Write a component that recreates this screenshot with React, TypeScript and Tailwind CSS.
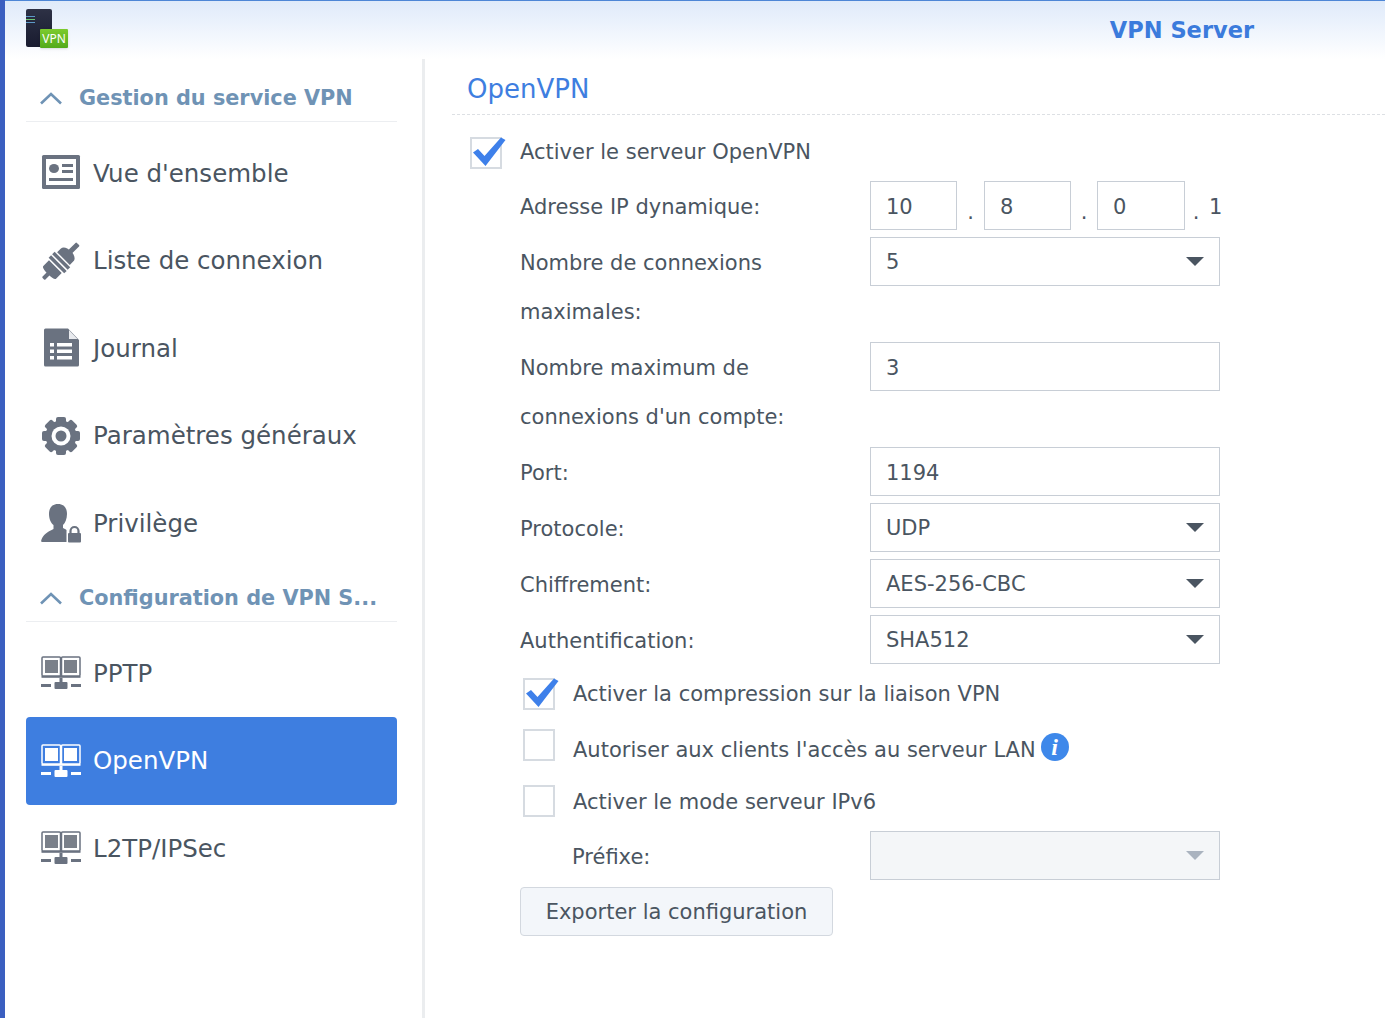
import React from "react";

const G = "#6a7280";

function IconCard() {
  return (
    <svg width="40" height="36" viewBox="0 0 40 36" className="-translate-y-[1px]">
      <rect x="1" y="1" width="38" height="34" rx="1.5" fill={G} />
      <rect x="5" y="5" width="30" height="26" fill="#fff" />
      <ellipse cx="13" cy="14.500" rx="5" ry="4.500" fill={G} />
      <rect x="21" y="10" width="11" height="3" fill={G} />
      <rect x="21" y="16" width="11" height="3" fill={G} />
      <rect x="8" y="24" width="24" height="3" fill={G} />
    </svg>
  );
}
function IconPlug() {
  return (
    <svg width="40" height="38" viewBox="0 0 40 38">
      <g transform="rotate(-45 20 19)" fill={G}>
        <rect x="-5" y="17" width="9" height="4" rx="1" />
        <path d="M4 10h8v18H4c-1.500 0-2.500-3-2.500-9S2.500 10 4 10z" />
        <rect x="13.500" y="8" width="3.500" height="22" />
        <rect x="18.500" y="8" width="3.500" height="22" />
        <path d="M23.500 10h5c3.500 0 5.500 4 5.500 9s-2 9-5.500 9h-5z" />
        <rect x="33" y="16.500" width="11" height="5" rx="1" />
      </g>
    </svg>
  );
}
function IconDoc() {
  return (
    <svg width="40" height="40" viewBox="0 0 40 40">
      <path d="M3 2a1.500 1.500 0 0 1 1.500-1.500H27L38 12v25a1.500 1.500 0 0 1-1.500 1.500h-32A1.500 1.500 0 0 1 3 37z" fill={G} />
      <path d="M28 2l8.500 9H28z" fill="#e8eaee" />
      <g fill="#fff">
        <rect x="9" y="15" width="4" height="3.500" />
        <rect x="16" y="15" width="15" height="3.500" />
        <rect x="9" y="21.500" width="4" height="3.500" />
        <rect x="16" y="21.500" width="15" height="3.500" />
        <rect x="9" y="28" width="4" height="3.500" />
        <rect x="16" y="28" width="15" height="3.500" />
      </g>
    </svg>
  );
}
function IconGear() {
  const teeth = [0, 45, 90, 135, 180, 225, 270, 315];
  return (
    <svg width="40" height="40" viewBox="0 0 40 40">
      <circle cx="20" cy="20" r="15.500" fill={G} />
      {teeth.map((a) => (
        <rect key={a} x="15" y="1" width="10" height="8" rx="2" fill={G} transform={`rotate(${a} 20 20)`} />
      ))}
      <circle cx="20" cy="20" r="9.500" fill="#fff" />
      <circle cx="20" cy="20" r="5.500" fill={G} />
    </svg>
  );
}
function IconUser() {
  return (
    <svg width="40" height="40" viewBox="0 0 40 40">
      <path d="M17 1c6 0 9 4 9 10 0 5-2 9-4 11v3c2 1 4 2 5.500 3V39H1c-1 0-1-1-.5-2.500C2 32 6 29 12.500 26v-4C10 20 8 16 8 11 8 5 11 1 17 1z" fill={G} />
      <rect x="25.500" y="22" width="15" height="18" fill="#fff" />
      <rect x="27" y="30" width="13" height="9.500" rx="1" fill={G} />
      <path d="M29.500 31v-3a4 4 0 0 1 8 0v3" fill="none" stroke={G} strokeWidth="2.200" />
    </svg>
  );
}
function IconNet({ c = G, fill = "#7a808a" }: { c?: string; fill?: string }) {
  return (
    <svg width="40" height="34" viewBox="0 0 40 34">
      <rect x="1" y="1" width="18.500" height="19" rx="1" fill="none" stroke={c} strokeWidth="1.500" />
      <rect x="20.500" y="1" width="18.500" height="19" rx="1" fill="none" stroke={c} strokeWidth="1.500" />
      <rect x="4" y="4" width="13" height="13" fill={fill} />
      <rect x="23" y="4" width="13" height="13" fill={fill} />
      <rect x="0.500" y="20" width="39" height="1.800" fill={c} />
      <rect x="18.500" y="22" width="3" height="5" fill={c} />
      <rect x="13.500" y="26" width="13" height="7" rx="1" fill={c} />
      <rect x="0" y="28" width="10" height="3" fill={c} />
      <rect x="30" y="28" width="10" height="3" fill={c} />
    </svg>
  );
}

function Logo() {
  return (
    <div className="relative w-[44px] h-[44px]">
      <div className="w-[26px] h-[38px] rounded-[2px] bg-gradient-to-b from-[#2d3145] to-[#191c30] flex flex-col gap-[2px] pt-[7px]">
        <div className="w-[9px] h-[1px] bg-[#5d9ac8]" />
        <div className="w-[9px] h-[1px] bg-[#6fc86f]" />
        <div className="w-[9px] h-[1px] bg-[#5d9ac8]" />
      </div>
      <div
        className="absolute left-[14px] top-[20px] w-[28px] h-[19px] rounded-[1px] bg-gradient-to-b from-[#7ccb2e] to-[#52aa1a] text-white text-[12px] leading-[19px] text-center shadow-sm"
        style={{ fontFamily: "'Noto Sans', sans-serif" }}
      >
        VPN
      </div>
    </div>
  );
}

function Section({ title }: { title: string }) {
  return (
    <div className="h-[55px] flex items-end border-b border-[#eceef1] pb-[8px]">
      <svg width="24" height="14" viewBox="0 0 24 14" className="ml-[13px] mr-[16px] mb-[8px]">
        <path d="M2 12.500 12 3l10 9.500" fill="none" stroke="#6f93b5" strokeWidth="2.600" />
      </svg>
      <span className="text-[20.800px] leading-[30px] font-bold text-[#6f93b5] whitespace-nowrap">{title}</span>
    </div>
  );
}

function Item({ icon, label, active }: { icon: React.ReactNode; label: string; active?: boolean }) {
  return (
    <div
      className={`h-[87.500px] flex items-center rounded-[4px] pl-[15px] ${
        active ? "bg-[#3e7ee0] text-white" : "text-[#4a5561]"
      }`}
    >
      <div className="w-[40px] flex justify-center">{icon}</div>
      <span className="ml-[12px] text-[24.500px] whitespace-nowrap translate-y-[1px]">{label}</span>
    </div>
  );
}

function Box({ checked }: { checked?: boolean }) {
  return (
    <div className="relative w-[32px] h-[32px] border-2 border-[#d6dbe1] bg-white shrink-0">
      {checked && (
        <svg width="36" height="30" viewBox="0 0 36 30" className="absolute left-[-1px] top-[-2px]">
          <path d="M2 15.500 7 12l6.500 7L30 .5l4.500 2.500L14.500 29z" fill="#3e80ea" />
        </svg>
      )}
    </div>
  );
}

function Field({ value, w = "w-[350px]" }: { value: string; w?: string }) {
  return (
    <div className={`${w} h-[49px] border border-[#c8ced6] bg-white pl-[15px] text-[21px] leading-[49px] text-[#4a5561] shrink-0`}>
      <div className="translate-y-[1px]">{value}</div>
    </div>
  );
}

function Select({ value, disabled }: { value: string; disabled?: boolean }) {
  return (
    <div
      className={`w-[350px] h-[49px] border border-[#c8ced6] pl-[15px] pr-[15px] flex items-center justify-between text-[21px] text-[#4a5561] shrink-0 ${
        disabled ? "bg-[#f4f6f8]" : "bg-white"
      }`}
    >
      <span className="translate-y-[1px]">{value}</span>
      <svg width="18" height="9" viewBox="0 0 18 9">
        <path d="M0 0h18L9 9z" fill={disabled ? "#aab3bf" : "#4a5561"} />
      </svg>
    </div>
  );
}

function Row({ label, children }: { label: React.ReactNode; children: React.ReactNode }) {
  return (
    <div className="flex mb-[7px] pl-[68px]">
      <div className="w-[350px] shrink-0 pr-[60px] text-[#4a5561] text-[21px] leading-[49px]">
        <div className="translate-y-[2px]">{label}</div>
      </div>
      {children}
    </div>
  );
}

function Dot({ t, w }: { t: string; w: string }) {
  return <div className={`${w} text-[21px] leading-[49px] text-center text-[#4a5561] translate-y-[7px]`}>{t}</div>;
}

export default function App() {
  return (
    <div
      className="w-[1385px] h-[1018px] overflow-hidden flex bg-white"
      style={{ fontFamily: "'DejaVu Sans', sans-serif" }}
    >
      <div className="w-[5px] h-full bg-[#3b5fc0] shrink-0" />
      <div className="flex-1 flex flex-col min-w-0">
        <header className="h-[59px] shrink-0 border-t border-[#4d86d6] bg-gradient-to-b from-[#dfeafa] to-white flex justify-between pl-[21px] pr-[131px]">
          <div className="pt-[8px]">
            <Logo />
          </div>
          <div className="pt-[14px] text-[#3b7bdc] font-bold text-[22.500px] leading-[30px]">VPN Server</div>
        </header>
        <div className="flex-1 flex min-h-0">
          <aside className="w-[420px] shrink-0 border-r-[3px] border-[#ebedef] pl-[21px] pr-[25px] pt-[8px]">
            <Section title="Gestion du service VPN" />
            <div className="pt-[7.500px]">
              <Item icon={<IconCard />} label="Vue d'ensemble" />
              <Item icon={<IconPlug />} label="Liste de connexion" />
              <Item icon={<IconDoc />} label="Journal" />
              <Item icon={<IconGear />} label="Paramètres généraux" />
              <Item icon={<IconUser />} label="Privilège" />
            </div>
            <Section title="Configuration de VPN S..." />
            <div className="pt-[7.500px]">
              <Item icon={<IconNet />} label="PPTP" />
              <Item icon={<IconNet c="#fff" fill="#fff" />} label="OpenVPN" active />
              <Item icon={<IconNet />} label="L2TP/IPSec" />
            </div>
          </aside>
          <main className="flex-1 min-w-0 pl-[27px]">
            <div className="h-[56px] border-b border-dashed border-[#dde0e4] pl-[15px] pt-[12px] text-[26px] leading-[36px] text-[#3e7ee0]">
              OpenVPN
            </div>
            <div className="flex items-center h-[33px] mt-[21px] pl-[18px]">
              <Box checked />
              <span className="ml-[18px] text-[21px] text-[#4a5561]">Activer le serveur OpenVPN</span>
            </div>
            <div className="h-[12px]" />
            <Row label="Adresse IP dynamique:">
              <Field value="10" w="w-[87px]" />
              <Dot t="." w="w-[27px]" />
              <Field value="8" w="w-[87px]" />
              <Dot t="." w="w-[26px]" />
              <Field value="0" w="w-[88px]" />
              <Dot t="." w="w-[22px]" />
              <div className="text-[21px] leading-[49px] text-[#4a5561] ml-[2px] translate-y-[2px]">1</div>
            </Row>
            <Row label="Nombre de connexions maximales:">
              <Select value="5" />
            </Row>
            <Row label="Nombre maximum de connexions d'un compte:">
              <Field value="3" />
            </Row>
            <Row label="Port:">
              <Field value="1194" />
            </Row>
            <Row label="Protocole:">
              <Select value="UDP" />
            </Row>
            <Row label="Chiffrement:">
              <Select value="AES-256-CBC" />
            </Row>
            <Row label="Authentification:">
              <Select value="SHA512" />
            </Row>
            <div className="pl-[71px] mt-[14px] flex items-center h-[32px]">
              <Box checked />
              <span className="ml-[18px] text-[21px] text-[#4a5561] translate-y-[1px]">
                Activer la compression sur la liaison VPN
              </span>
            </div>
            <div className="pl-[71px] mt-[19px] flex items-center h-[32px]">
              <Box />
              <span className="ml-[18px] text-[21px] text-[#4a5561] translate-y-[6px]">
                Autoriser aux clients l'accès au serveur LAN
              </span>
              <div
                className="ml-[5px] w-[28px] h-[28px] rounded-full bg-[#3e88ea] text-white font-bold italic text-[24px] leading-[28px] text-center translate-y-[2px]"
                style={{ fontFamily: "'Liberation Serif', serif" }}
              >
                i
              </div>
            </div>
            <div className="pl-[71px] mt-[24px] flex items-center h-[32px]">
              <Box />
              <span className="ml-[18px] text-[21px] text-[#4a5561] translate-y-[2px]">Activer le mode serveur IPv6</span>
            </div>
            <div className="mt-[14px] flex pl-[120px]">
              <div className="w-[298px] shrink-0 text-[21px] leading-[49px] text-[#4a5561] translate-y-[2px]">Préfixe:</div>
              <Select value="" disabled />
            </div>
            <div className="ml-[68px] mt-[7px] w-[313px] h-[49px] rounded-[4px] border border-[#d3d8df] bg-[#f3f6fa] text-center text-[21px] leading-[49px] text-[#4a5561]">
              Exporter la configuration
            </div>
          </main>
        </div>
      </div>
    </div>
  );
}
